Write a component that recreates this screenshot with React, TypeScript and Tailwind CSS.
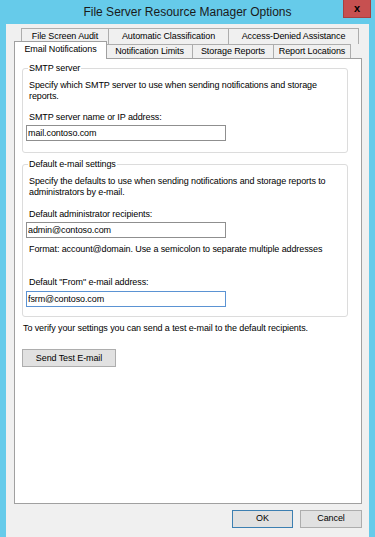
import React from 'react';

const rowOneTabs = [
  { label: 'File Screen Audit', width: 'w-[88px]' },
  { label: 'Automatic Classification', width: 'w-[120px]' },
  { label: 'Access-Denied Assistance', width: 'w-[130px]' },
];

const rowTwoTabs = [
  { label: 'Notification Limits', width: 'w-[86px]' },
  { label: 'Storage Reports', width: 'w-[81px]' },
  { label: 'Report Locations', width: 'w-[77px]' },
];

const TextBox: React.FC<{ value: string; focused?: boolean }> = ({ value, focused }) => (
  <input
    readOnly
    defaultValue={value}
    className={`block w-[200px] h-[16px] bg-white border pl-[1px] text-[9px] tracking-[-0.1px] text-black outline-none ${
      focused ? 'border-[#5b93d3]' : 'border-[#8f8f8f]'
    }`}
  />
);

export default function App() {
  return (
    <div className="w-[375px] h-[537px] bg-[#66cbea] flex flex-col overflow-hidden font-['Liberation_Sans',Arial,sans-serif] text-black">
      <div className="relative h-[24px] flex items-center justify-center text-[12px] text-[#1a1a1a]">
        File Server Resource Manager Options
        <div className="absolute right-[4px] top-0 w-[28px] h-[18px] bg-[#c75050] border border-t-0 border-[#a84040] flex items-center justify-center text-[11px] font-bold leading-none text-black">
          x
        </div>
      </div>

      <div className="flex-1 mx-[6px] bg-[#f0f0f0] pt-[4px] pl-[8px] pr-[7px] flex flex-col tracking-[-0.1px]">
        {/* back row of tabs */}
        <div className="flex h-[16px] ml-[7px]">
          {rowOneTabs.map((t, i) => (
            <div
              key={t.label}
              className={`${t.width} h-full flex items-center justify-center border-t border-r border-[#adadad] bg-[#f0f0f0] text-[9px] ${
                i === 0 ? 'border-l' : ''
              }`}
            >
              {t.label}
            </div>
          ))}
        </div>

        {/* front row of tabs */}
        <div className="flex items-end h-[14px]">
          <div className="relative z-10 w-[93px] h-[18px] -mb-px bg-white border-l border-t border-r border-[#a0a0a0] flex items-center justify-center text-[9px] pb-[2px]">
            Email Notifications
          </div>
          {rowTwoTabs.map((t) => (
            <div
              key={t.label}
              className={`${t.width} h-[14px] flex items-center justify-center border-t border-r border-[#adadad] bg-[#f0f0f0] text-[9px]`}
            >
              {t.label}
            </div>
          ))}
        </div>

        <div className="h-[446px] border border-[#a0a0a0] bg-white pl-[7px] pr-[13px] pt-[4px] text-[9px] leading-[11px]">
          <fieldset className="border border-[#dcdcdc] rounded-[3px] px-[3px] pb-[11px]">
            <legend className="ml-[2px] px-[1px] leading-[11px]">SMTP server</legend>
            <p className="mt-[6px] ml-[3px]">
              Specify which SMTP server to use when sending notifications and storage
              <br />
              reports.
            </p>
            <p className="mt-[10px] ml-[3px]">SMTP server name or IP address:</p>
            <div className="mt-[2px]">
              <TextBox value="mail.contoso.com" />
            </div>
          </fieldset>

          <fieldset className="mt-[6px] border border-[#dcdcdc] rounded-[3px] px-[3px] pb-[9px]">
            <legend className="ml-[2px] px-[1px] leading-[11px]">Default e-mail settings</legend>
            <p className="mt-[6px] ml-[3px]">
              Specify the defaults to use when sending notifications and storage reports to
              <br />
              administrators by e-mail.
            </p>
            <p className="mt-[11px] ml-[3px]">Default administrator recipients:</p>
            <div className="mt-[2px]">
              <TextBox value="admin@contoso.com" />
            </div>
            <p className="mt-[6px] ml-[3px]">
              Format: account@domain. Use a semicolon to separate multiple addresses
            </p>
            <p className="mt-[22px] ml-[3px]">Default "From" e-mail address:</p>
            <div className="mt-[3px]">
              <TextBox value="fsrm@contoso.com" focused />
            </div>
          </fieldset>

          <p className="mt-[6px] pl-[1px]">
            To verify your settings you can send a test e-mail to the default recipients.
          </p>
          <button className="mt-[15px] w-[94px] h-[18px] bg-[#e1e1e1] border border-[#adadad] text-[9px] flex items-center justify-center">
            Send Test E-mail
          </button>
        </div>

        <div className="mt-[6px] flex justify-end gap-[7px] text-[9px]">
          <button className="w-[61px] h-[18px] bg-[#e1e1e1] border border-[#3c7fb1] flex items-center justify-center">
            OK
          </button>
          <button className="w-[62px] h-[18px] bg-[#e1e1e1] border border-[#adadad] flex items-center justify-center">
            Cancel
          </button>
        </div>
      </div>
    </div>
  );
}
